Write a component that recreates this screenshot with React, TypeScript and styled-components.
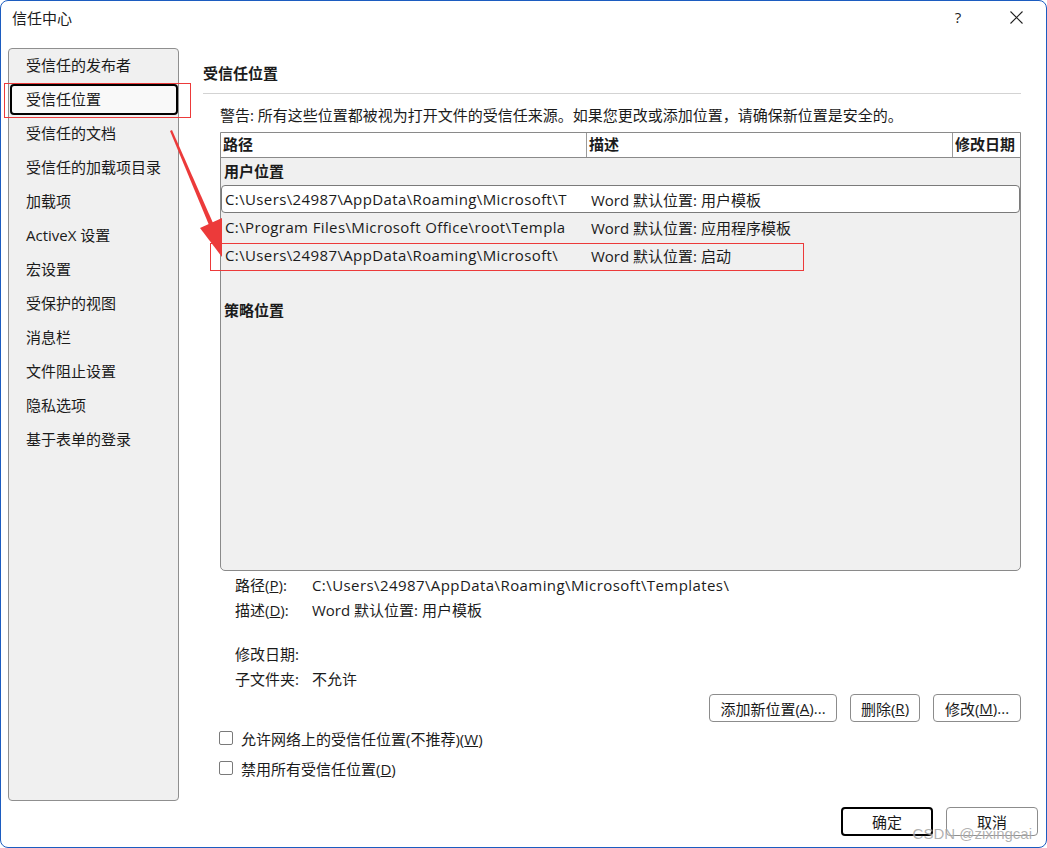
import React from 'react'
import styled, { createGlobalStyle } from 'styled-components'

const GlobalStyle = createGlobalStyle`
	html, body { margin: 0; padding: 0; background: #fff; }
	body {
		font-family: "Open Sans", "Noto Sans CJK SC", sans-serif;
		font-size: 15px;
		color: #1b1b1b;
	}
	* { box-sizing: border-box; }
`;

const sidebarItems = [
	'受信任的发布者', '受信任位置', '受信任的文档', '受信任的加载项目录', '加载项',
	'ActiveX 设置', '宏设置', '受保护的视图', '消息栏', '文件阻止设置', '隐私选项', '基于表单的登录',
];

const userRows = [
	{ path: 'C:\\Users\\24987\\AppData\\Roaming\\Microsoft\\T', desc: 'Word 默认位置: 用户模板' },
	{ path: 'C:\\Program Files\\Microsoft Office\\root\\Templa', desc: 'Word 默认位置: 应用程序模板' },
	{ path: 'C:\\Users\\24987\\AppData\\Roaming\\Microsoft\\', desc: 'Word 默认位置: 启动' },
];

/** Outer dialog frame */
const Window = styled.div`
	position: relative;
	width: 1047px;
	height: 848px;
	border: 1px solid #1c5cc0;
	border-radius: 8px;
	background: #fff;
	display: flex;
	flex-direction: column;
	overflow: hidden;
`;
const TitleBar = styled.div`
	height: 37px;
	display: flex;
	align-items: center;
	padding-left: 11px;
	padding-bottom: 5px;
`;
const TitleText = styled.div`
	flex: 1;
	font-size: 15px;
`;
const TitleButton = styled.div<{ width: number }>`
	width: ${({ width }) => width}px;
	display: flex;
	justify-content: center;
	align-items: center;
	height: 30px;
	color: #222;
`;
const TitleGap = styled.div<{ width: number }>`
	width: ${({ width }) => width}px;
`;
const Content = styled.div`
	display: flex;
	margin-top: 10px;
	padding-left: 7px;
	height: 753px;
`;
const Sidebar = styled.div`
	width: 171px;
	height: 753px;
	background: #f0f0f0;
	border: 1px solid #8f8f8f;
	border-radius: 4px;
	display: flex;
	flex-direction: column;
`;
const SideItem = styled.div<{ selected?: boolean }>`
	margin: 1px 0 2px 1px;
	height: 31px;
	flex: none;
	display: flex;
	align-items: center;
	padding: 0 0 2px 14px;
	border: 2px solid ${({ selected }) => selected ? '#000' : 'transparent'};
	border-radius: 4px;
	background: ${({ selected }) => selected ? '#f9f9f9' : 'transparent'};
	white-space: nowrap;
`;
const Main = styled.div`
	flex: 1;
	margin-left: 24px;
	padding-right: 25px;
	display: flex;
	flex-direction: column;
	padding-top: 15px;
`;
const Heading = styled.div`
	font-weight: bold;
	line-height: 20px;
	height: 20px;
`;
const Separator = styled.div`
	margin-top: 10px;
	height: 1px;
	background: #d3d3d3;
`;
const Indented = styled.div`
	padding-left: 17px;
	display: flex;
	flex-direction: column;
`;
const Warning = styled.div`
	margin-top: 11px;
	line-height: 20px;
	white-space: nowrap;
`;
const Table = styled.div`
	margin-top: 7px;
	height: 439px;
	border: 1px solid #8a8a8a;
	border-radius: 0 0 5px 5px;
	background: #f0f0f0;
	overflow: hidden;
`;
const HeaderRow = styled.div`
	display: grid;
	grid-template-columns: 366px 366px 1fr;
	height: 25px;
	background: #fff;
	border-bottom: 1px solid #8a8a8a;
`;
const HeaderCell = styled.div<{ last?: boolean }>`
	font-weight: bold;
	padding-left: 2px;
	line-height: 23px;
	border-right: ${({ last }) => last ? 'none' : '1px solid #9a9a9a'};
	white-space: nowrap;
	overflow: hidden;
`;
const GroupLabel = styled.div<{ gap?: number }>`
	font-weight: bold;
	height: 27px;
	line-height: 27px;
	padding-left: 3px;
	margin-top: ${({ gap }) => gap ?? 0}px;
`;
const Row = styled.div<{ selected?: boolean }>`
	display: grid;
	grid-template-columns: 366px 1fr;
	height: 28px;
	align-items: center;
	border: 1px solid ${({ selected }) => selected ? '#7a7a7a' : 'transparent'};
	border-radius: 4px;
	background: ${({ selected }) => selected ? '#fff' : 'transparent'};
`;
const Cell = styled.div<{ path?: boolean }>`
	padding-left: 3px;
	white-space: nowrap;
	overflow: hidden;
	letter-spacing: ${({ path }) => path ? '0.38px' : 'normal'};
`;
const Details = styled.div`
	padding-left: 15px;
	padding-top: 1px;
	display: flex;
	flex-direction: column;
`;
const DetailRow = styled.div<{ gap?: number }>`
	display: grid;
	grid-template-columns: 77px 1fr;
	height: 25px;
	align-items: center;
	margin-top: ${({ gap }) => gap ?? 0}px;
	white-space: nowrap;
`;
const PathText = styled.span`
	letter-spacing: 0.42px;
`;
const ButtonRow = styled.div`
	display: flex;
	justify-content: flex-end;
	gap: 13px;
	margin-top: 3px;
`;
const Button = styled.div<{ primary?: boolean; width: number; height?: number }>`
	width: ${({ width }) => width}px;
	height: ${({ height }) => height ?? 28}px;
	display: flex;
	align-items: center;
	justify-content: center;
	border: ${({ primary }) => primary ? '2px solid #000' : '1px solid #8c8c8c'};
	border-radius: 4px;
	background: #fff;
	white-space: nowrap;
`;
const Key = styled.span`
	text-decoration: underline;
`;
const CheckRow = styled.div<{ gap?: number }>`
	display: flex;
	align-items: center;
	height: 30px;
	gap: 8px;
	margin-left: 16px;
	margin-top: ${({ gap }) => gap ?? 0}px;
	white-space: nowrap;
`;
const CheckBox = styled.div`
	width: 14px;
	height: 14px;
	border: 1px solid #7a7a7a;
	border-radius: 2px;
	background: #fff;
`;
const Footer = styled.div`
	display: flex;
	justify-content: flex-end;
	gap: 13px;
	padding-right: 8px;
	margin-top: 6px;
`;
/** Red annotation boxes drawn on top of the screenshot */
const Mark = styled.div<{ x: number; y: number; w: number; h: number }>`
	position: absolute;
	left: ${({ x }) => x}px;
	top: ${({ y }) => y}px;
	width: ${({ w }) => w}px;
	height: ${({ h }) => h}px;
	border: 1px solid #ec3a3a;
	pointer-events: none;
`;
const Arrow = styled.svg`
	position: absolute;
	left: 0;
	top: 0;
	pointer-events: none;
`;
const Watermark = styled.div`
	position: absolute;
	right: 14px;
	bottom: 5px;
	font-family: "Liberation Sans", sans-serif;
	font-size: 15px;
	color: rgba(110, 110, 110, 0.55);
	text-shadow: 0 0 1px rgba(255, 255, 255, 0.8);
	pointer-events: none;
`;

export default function App() {
	return (
		<>
			<GlobalStyle />
			<Window>
				<TitleBar>
					<TitleText>信任中心</TitleText>
					<TitleButton width={40}>?</TitleButton>
					<TitleGap width={29} />
					<TitleButton width={18}>
						<svg width="13" height="13" viewBox="0 0 13 13">
							<path d="M0.5 0.5 L12.5 12.5 M12.5 0.5 L0.5 12.5" stroke="#222" strokeWidth="1.1" />
						</svg>
					</TitleButton>
					<TitleGap width={21} />
				</TitleBar>
				<Content>
					<Sidebar>
						{sidebarItems.map((s, i) => (
							<SideItem key={s} selected={i === 1}>{s}</SideItem>
						))}
					</Sidebar>
					<Main>
						<Heading>受信任位置</Heading>
						<Separator />
						<Indented>
							<Warning>警告: 所有这些位置都被视为打开文件的受信任来源。如果您更改或添加位置，请确保新位置是安全的。</Warning>
							<Table>
								<HeaderRow>
									<HeaderCell>路径</HeaderCell>
									<HeaderCell>描述</HeaderCell>
									<HeaderCell last>修改日期</HeaderCell>
								</HeaderRow>
								<GroupLabel>用户位置</GroupLabel>
								{userRows.map((r, i) => (
									<Row key={r.desc} selected={i === 0}>
										<Cell path>{r.path}</Cell>
										<Cell>{r.desc}</Cell>
									</Row>
								))}
								<GroupLabel gap={28}>策略位置</GroupLabel>
							</Table>
							<Details>
								<DetailRow>
									<span>路径(<Key>P</Key>):</span>
									<PathText>C:\Users\24987\AppData\Roaming\Microsoft\Templates\</PathText>
								</DetailRow>
								<DetailRow>
									<span>描述(<Key>D</Key>):</span>
									<span>Word 默认位置: 用户模板</span>
								</DetailRow>
								<DetailRow gap={19}>
									<span>修改日期:</span>
									<span />
								</DetailRow>
								<DetailRow>
									<span>子文件夹:</span>
									<span>不允许</span>
								</DetailRow>
							</Details>
							<ButtonRow>
								<Button width={128}>添加新位置(<Key>A</Key>)...</Button>
								<Button width={70}>删除(<Key>R</Key>)</Button>
								<Button width={88}>修改(<Key>M</Key>)...</Button>
							</ButtonRow>
						</Indented>
						<CheckRow gap={1}>
							<CheckBox />
							<span>允许网络上的受信任位置(不推荐)(<Key>W</Key>)</span>
						</CheckRow>
						<CheckRow>
							<CheckBox />
							<span>禁用所有受信任位置(<Key>D</Key>)</span>
						</CheckRow>
					</Main>
				</Content>
				<Footer>
					<Button primary width={92} height={29}>确定</Button>
					<Button width={92} height={29}>取消</Button>
				</Footer>
				<Mark x={3} y={82} w={187} h={35} />
				<Mark x={209} y={242} w={594} h={28} />
				<Arrow width="260" height="280" viewBox="0 0 260 280">
					<polygon points="169,130 171,129 212,222 208,224" fill="#ec3a3a" />
					<polygon points="199,227 221,217 221,256" fill="#ec3a3a" />
				</Arrow>
				<Watermark>CSDN @zixingcai</Watermark>
			</Window>
		</>
	);
}
